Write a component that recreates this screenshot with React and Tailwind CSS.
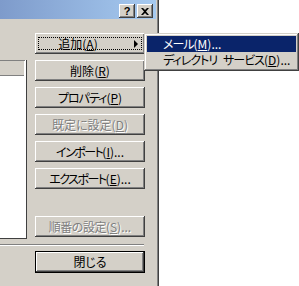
const bevel =
  "shadow-[inset_-1px_-1px_0_#404040,inset_1px_1px_0_#ffffff,inset_-2px_-2px_0_#808080]";

function Btn({ label, mn, rest, disabled, children, className = "", labelClass = "" }) {
  return (
    <div
      className={`relative h-[21px] w-[110px] bg-[#d4d0c8] ${bevel} flex items-center justify-center ${className}`}
    >
      <span
        className={
          disabled
            ? "text-[#808080] [text-shadow:1px_1px_0_#ffffff]"
            : "text-black"
        }
      >
        <span className={labelClass}>{label}</span>(
        <span className="underline underline-offset-[1px]">{mn}</span>){rest}
      </span>
      {children}
    </div>
  );
}

export default function App() {
  return (
    <div
      className="relative w-[299px] h-[286px] bg-white overflow-hidden flex text-[12px] leading-none [font-feature-settings:'palt']"
      style={{ fontFamily: '"Noto Sans CJK JP", "Noto Sans", sans-serif' }}
    >
      <div className="w-[159px] h-full bg-[#d4d0c8] border-r border-r-[#404040] shadow-[inset_-1px_0_0_#808080] flex flex-col">
        {/* title bar */}
        <div className="h-[19px] w-[156px] bg-[linear-gradient(90deg,#7e9bcb,#a6caf0)] flex items-start justify-end pt-[4px] pr-[3px] gap-[2px]">
          <div className={`w-[16px] h-[14px] bg-[#d4d0c8] ${bevel} flex items-center justify-center font-bold text-[11px]`}
            style={{ fontFamily: '"Liberation Sans", sans-serif' }}>?</div>
          <div className={`w-[16px] h-[14px] bg-[#d4d0c8] ${bevel} flex items-center justify-center`}>
            <svg width="8" height="7" viewBox="0 0 8 7">
              <path d="M0 0h2l2 2 2-2h2L5 3.5 8 7H6L4 5 2 7H0l3-3.5z" fill="#000" />
            </svg>
          </div>
        </div>

        <div className="flex items-start">
          {/* list view */}
          <div className="mt-[41px] w-[27px] h-[179px] bg-white shadow-[inset_-1px_-1px_0_#404040,inset_-2px_-2px_0_#ffffff,inset_0_1px_0_#808080] flex flex-col">
            <div className="h-[15px] bg-[#d4d0c8] border-b border-[#808080] mt-[1px] mr-[3px]" />
          </div>

          {/* buttons */}
          <div className="ml-[8px] mt-[14px] flex flex-col gap-[6px]">
            <Btn label="追加" mn="A" className="pr-[24px]">
              <div className="absolute inset-x-[3px] inset-y-[4px] border border-dotted border-black" />
              <div className="absolute right-[7px] top-[7px] w-0 h-0 border-y-[4px] border-y-transparent border-l-[4px] border-l-black" />
            </Btn>
            <Btn label="削除" mn="R" />
            <Btn label="プロパティ" mn="P" labelClass="tracking-[-1px]" />
            <Btn label="既定に設定" mn="D" disabled />
            <Btn label="インポート" mn="I" rest="..." labelClass="tracking-[-1.5px]" />
            <Btn label="エクスポート" mn="E" rest="..." labelClass="tracking-[-1.5px]" />
            <Btn label="順番の設定" mn="S" rest="..." disabled className="mt-[21px]" labelClass="tracking-[-0.5px]" />
          </div>
        </div>

        {/* separator */}
        <div className="mt-[5px] w-[144px] h-[2px] border-t border-t-[#808080] border-b border-b-white" />

        {/* close */}
        <div className="ml-[35px] mt-[5px] w-[110px] h-[22px] border border-black bg-[#d4d0c8] shadow-[inset_-1px_-1px_0_#404040,inset_1px_1px_0_#ffffff,inset_-2px_-2px_0_#808080] flex items-center justify-center">
          閉じる
        </div>
      </div>

      {/* popup menu */}
      <div className="absolute left-[144px] top-[33px] w-[155px] h-[38px] bg-[#d4d0c8] p-[3px] shadow-[inset_-1px_-1px_0_#404040,inset_1px_1px_0_#d4d0c8,inset_-2px_-2px_0_#808080,inset_2px_2px_0_#ffffff] flex flex-col whitespace-nowrap">
        <div className="h-[16px] bg-[#0a246a] text-white flex items-center pl-[16px]">
          <span className="tracking-[-1px]">メール</span>(
          <span className="underline underline-offset-[1px]">M</span>)...
        </div>
        <div className="h-[16px] text-black flex items-center pl-[16px]">
          <span className="tracking-[-1px]">ディレクトリ</span>
          <span className="inline-block w-[6px]" />
          <span className="tracking-[-1px]">サービス</span>(
          <span className="underline underline-offset-[1px]">D</span>)...
        </div>
      </div>
    </div>
  );
}
